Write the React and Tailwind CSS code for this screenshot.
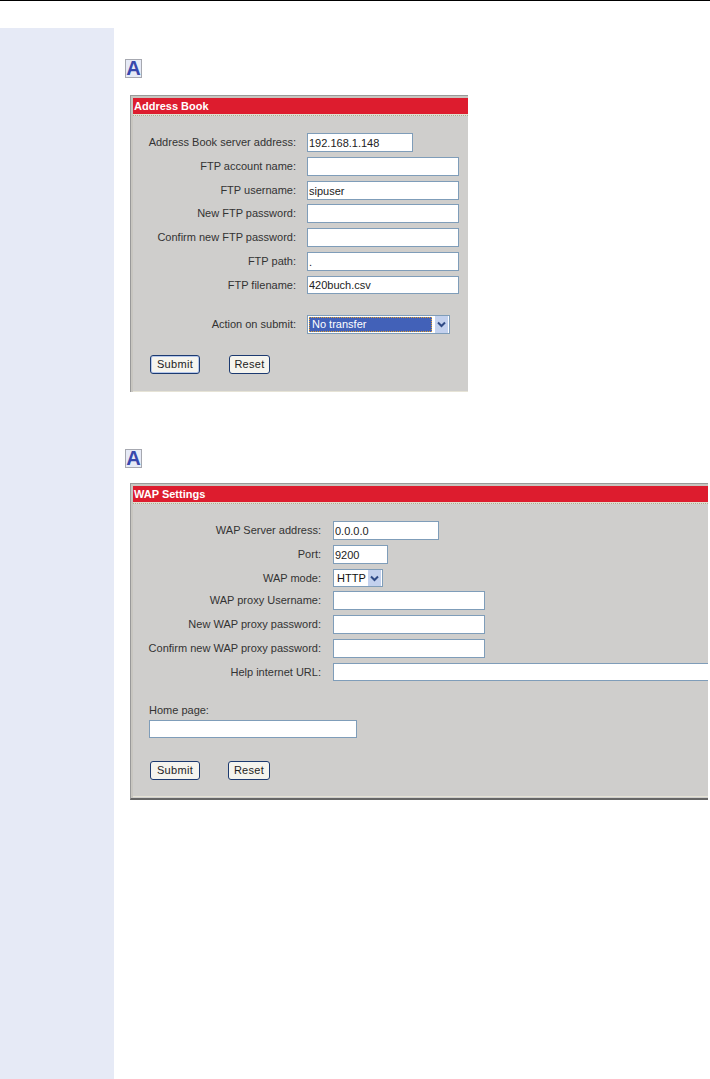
const font = "font-['Liberation_Sans',Arial,sans-serif]";

function NoteIcon({ className }) {
  return (
    <div className={`flex h-[19px] w-[17px] items-end justify-center border border-[#a6a8b0] bg-[#e6eaf6] ${className}`}>
      <span className={`${font} text-[20px] font-bold leading-[17px] text-[#3647ad]`}>A</span>
    </div>
  );
}

function Chevron() {
  return (
    <svg width="9" height="7" viewBox="0 0 9 7" fill="none">
      <path d="M1 1.5 L4.5 5 L8 1.5" stroke="#2f4a86" strokeWidth="2" />
    </svg>
  );
}

function Field({ w, h = "h-[19px]", value = "", noRight }) {
  return (
    <input
      readOnly
      value={value}
      className={`${w} ${h} border border-[#7f9db9] bg-white px-[1px] text-[11px] text-[#222] outline-none ${font} ${noRight ? "border-r-0" : ""}`}
    />
  );
}

function Row({ label, labelW, gap, mt, children }) {
  return (
    <div className={`flex items-center ${mt}`}>
      <div className={`${labelW} ${gap} shrink-0 text-right text-[11px] leading-none text-[#333]`}>{label}</div>
      {children}
    </div>
  );
}

function Button({ w, focused, children, className = "" }) {
  return (
    <div className={`flex h-[19px] ${w} items-center justify-center rounded-[3px] border border-[#1c3a70] bg-[#f5f4ee] text-[11px] tracking-[0.3px] text-[#222] ${focused ? "shadow-[inset_0_0_0_1px_#b4c6ea]" : ""} ${className}`}>
      {children}
    </div>
  );
}

function Panel({ width, title, bottomDark, minH, children }) {
  return (
    <div className={`${width} ${minH} flex flex-col border-t border-l border-t-[#999] border-l-[#999] bg-[#c8c6c0] pl-[2px] pt-[2px] ${bottomDark ? "border-b-2 border-b-[#666]" : ""} ${font}`}>
      <div className="flex h-[16px] items-center bg-[#dd1c2e] pl-[1px] text-[11px] font-bold text-white">{title}</div>
      <div className="flex flex-1 flex-col bg-[#cfcecc]">
        <div className="h-[2px] border-b border-dotted border-b-[#aaa890] bg-[#e0ded0]"></div>
        <div className="flex-1">{children}</div>
        <div className={`h-[1px] bg-[#e6e3d6] ${bottomDark ? "mb-[1px]" : ""}`}></div>
      </div>
    </div>
  );
}

export default function App() {
  const lw1 = "w-[163px]";
  const g1 = "mr-[11px]";
  const lw2 = "w-[188px]";
  const g2 = "mr-[12px]";
  return (
    <div className="flex h-[1079px] w-[710px] flex-col overflow-hidden bg-white">
      <div className="h-[1px] bg-black"></div>
      <div className="mt-[27px] flex flex-1">
        <div className="w-[114px] bg-[#e6eaf6]"></div>
        <div className="flex-1 pt-[31px]">
          <NoteIcon className="ml-[11px]" />
          <div className="ml-[16px] mt-[17px]">
            <Panel width="w-[338px]" title="Address Book" minH="h-[297px]">
              <div className="pt-[17px]">
                <Row label="Address Book server address:" labelW={lw1} gap={g1} mt="">
                  <Field w="w-[106px]" value="192.168.1.148" />
                </Row>
                <Row label="FTP account name:" labelW={lw1} gap={g1} mt="mt-[5px]"><Field w="w-[152px]" /></Row>
                <Row label="FTP username:" labelW={lw1} gap={g1} mt="mt-[5px]"><Field w="w-[152px]" value="sipuser" /></Row>
                <Row label="New FTP password:" labelW={lw1} gap={g1} mt="mt-[4px]"><Field w="w-[152px]" /></Row>
                <Row label="Confirm new FTP password:" labelW={lw1} gap={g1} mt="mt-[5px]"><Field w="w-[152px]" /></Row>
                <Row label="FTP path:" labelW={lw1} gap={g1} mt="mt-[5px]"><Field w="w-[152px]" value="." /></Row>
                <Row label="FTP filename:" labelW={lw1} gap={g1} mt="mt-[5px]"><Field w="w-[152px]" h="h-[18px]" value="420buch.csv" /></Row>
                <Row label="Action on submit:" labelW={lw1} gap={g1} mt="mt-[21px]">
                  <div className="flex h-[19px] w-[143px] items-center border border-[#7f9db9] bg-white pl-[1px] pr-[1px]">
                    <div className="flex h-[15px] w-[125px] items-center border border-dotted border-[#e0a030] bg-[#4261b8] pl-[2px] text-[11px] text-white">No transfer</div>
                    <div className="ml-[3px] flex h-[17px] w-[13px] items-center justify-center bg-[#c3d1ee]"><Chevron /></div>
                  </div>
                </Row>
                <div className="ml-[17px] mt-[21px] flex">
                  <Button w="w-[50px]" focused>Submit</Button>
                  <Button w="w-[41px]" className="ml-[29px]">Reset</Button>
                </div>
              </div>
            </Panel>
          </div>
          <NoteIcon className="ml-[11px] mt-[57px]" />
          <div className="ml-[16px] mt-[15px]">
            <Panel width="w-[578px]" title="WAP Settings" bottomDark minH="h-[317px]">
              <div className="pt-[17px]">
                <Row label="WAP Server address:" labelW={lw2} gap={g2} mt=""><Field w="w-[106px]" value="0.0.0.0" /></Row>
                <Row label="Port:" labelW={lw2} gap={g2} mt="mt-[5px]"><Field w="w-[55px]" value="9200" /></Row>
                <Row label="WAP mode:" labelW={lw2} gap={g2} mt="mt-[5px]">
                  <div className="flex h-[18px] w-[50px] items-center border border-[#7f9db9] bg-white pl-[3px] pr-[1px] text-[11px] text-[#111]">
                    <span className="flex-1">HTTP</span>
                    <div className="flex h-[16px] w-[13px] items-center justify-center bg-[#c3d1ee]"><Chevron /></div>
                  </div>
                </Row>
                <Row label="WAP proxy Username:" labelW={lw2} gap={g2} mt="mt-[4px]"><Field w="w-[152px]" /></Row>
                <Row label="New WAP proxy password:" labelW={lw2} gap={g2} mt="mt-[5px]"><Field w="w-[152px]" /></Row>
                <Row label="Confirm new WAP proxy password:" labelW={lw2} gap={g2} mt="mt-[5px]"><Field w="w-[152px]" /></Row>
                <Row label="Help internet URL:" labelW={lw2} gap={g2} mt="mt-[5px]"><Field w="w-[375px]" h="h-[18px]" noRight /></Row>
                <div className="ml-[16px] mt-[24px] text-[11px] leading-none text-[#333]">Home page:</div>
                <div className="ml-[16px] mt-[4px] flex"><Field w="w-[208px]" h="h-[18px]" /></div>
                <div className="ml-[17px] mt-[23px] flex">
                  <Button w="w-[50px]">Submit</Button>
                  <Button w="w-[42px]" className="ml-[28px]">Reset</Button>
                </div>
              </div>
            </Panel>
          </div>
        </div>
      </div>
    </div>
  );
}
